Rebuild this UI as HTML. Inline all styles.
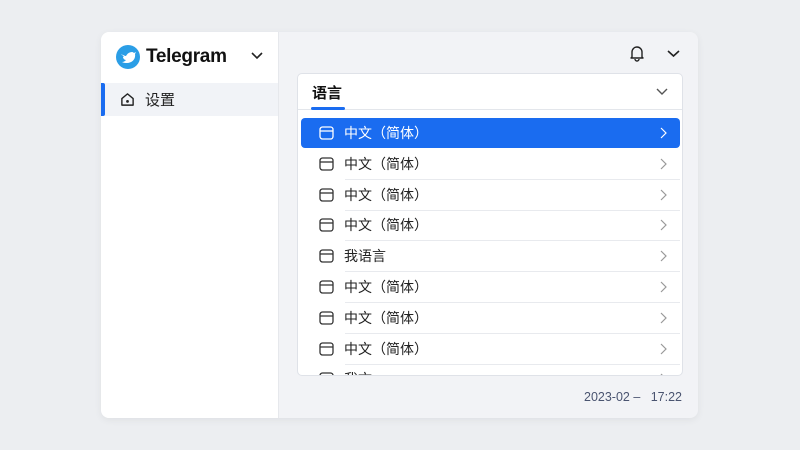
<!DOCTYPE html>
<html><head><meta charset="utf-8"><style>
*{margin:0;padding:0;box-sizing:border-box}
body{width:800px;height:450px;background:#eceef1;font-family:"Liberation Sans","Noto Sans CJK SC",sans-serif;position:relative;overflow:hidden}
.card{position:absolute;left:101px;top:32px;width:597px;height:386px;border-radius:8px;background:#f2f3f6;overflow:hidden;box-shadow:0 2px 8px rgba(0,0,0,.06)}
.side{position:absolute;left:0;top:0;width:178px;height:100%;background:#fff;border-right:1px solid #e6e8ec}
.logo{position:absolute;left:15px;top:13px;display:flex;align-items:center;gap:6px;font-size:19px;font-weight:bold;color:#111;letter-spacing:-.3px}
.nav{position:absolute;left:0;top:51px;width:177px;height:33px;background:#f1f3f7;display:flex;align-items:center;font-size:15px;color:#222}
.nav:before{content:"";position:absolute;left:0;top:0;width:4px;height:33px;background:#1a6cf0;border-radius:0 2px 2px 0}
.panel{position:absolute;left:196px;top:41px;width:386px;height:303px;background:#fff;border:1px solid #dfe2e8;border-radius:5px;overflow:hidden}
.hdr{height:36px;border-bottom:1px solid #e3e6eb;position:relative}
.hdr span{position:absolute;left:14px;top:8px;font-size:15px;font-weight:bold;color:#111}
.hdr i{position:absolute;left:13px;bottom:-1px;width:34px;height:3px;background:#1a6cf0;border-radius:2px}
.row{position:absolute;left:3px;width:379px;height:30px;display:flex;align-items:center;font-size:14px;color:#222}
.row .t{position:absolute;left:43px}
.row svg.ic{position:absolute;left:18px;top:8px}
.row svg.ar{position:absolute;right:13px;top:9px}
.row:after{content:"";position:absolute;left:44px;right:0;bottom:-1px;height:1px;background:#e8eaee}
.sel{background:#1a6cf0;color:#fff;border-radius:4px}
.sel:after{display:none}
.date{position:absolute;right:16px;bottom:14px;font-size:12.5px;color:#4a5470}
</style></head><body>
<div class="card">
<div class="side">
<div class="logo"><svg width="24" height="24" viewBox="0 0 24 24"><circle cx="12" cy="12" r="12" fill="#2b9ee6"/><path d="M5 9c2 1 4 2 5 2 1-2 3-4 6-4 1 0 2 1 2 1l2-1-1 2c1 5-3 9-8 9-2 0-3 0-5-1 2 0 3-1 4-2-2 0-3-2-3-3h1c-1-1-2-2-2-3z" fill="#fff"/></svg>Telegram</div>
<svg style="position:absolute;left:150px;top:20px" width="12" height="8" viewBox="0 0 12 8"><path d="M1 1l5 5 5-5" fill="none" stroke="#222" stroke-width="1.6"/></svg>
<div class="nav"><svg style="margin-left:19px;margin-right:10px" width="15" height="15" viewBox="0 0 16 16"><path d="M2 7l6-5 6 5v7H2z" fill="none" stroke="#222" stroke-width="1.5" stroke-linejoin="round"/><circle cx="8" cy="10" r="1.5" fill="#222"/></svg>设置</div>
</div>
<svg style="position:absolute;left:528px;top:13px" width="16" height="17" viewBox="0 0 16 17"><path d="M3 12V7a5 5 0 0110 0v5l1 1H2z M6 14a2 2 0 004 0" fill="none" stroke="#222" stroke-width="1.4" stroke-linejoin="round"/></svg>
<svg style="position:absolute;left:566px;top:18px" width="13" height="8" viewBox="0 0 13 8"><path d="M1 1l5.5 5 5.5-5" fill="none" stroke="#222" stroke-width="1.6"/></svg>
<div class="panel">
<div class="hdr"><span>语言</span><i></i><svg style="position:absolute;right:14px;top:14px" width="12" height="7" viewBox="0 0 12 7"><path d="M1 1l5 5 5-5" fill="none" stroke="#555" stroke-width="1.4"/></svg></div>
<div id="rows"></div>
</div>
<div class="date">2023-02 –&nbsp;&nbsp; 17:22</div>
</div>
<script>
var L=["中文（简体）","中文（简体）","中文（简体）","中文（简体）","我语言","中文（简体）","中文（简体）","中文（简体）","我文"];
var h="";L.forEach(function(t,i){var s=i==0;var c=s?"#fff":"#333";
h+='<div class="row'+(s?' sel':'')+'" style="top:'+(44+i*30.8)+'px"><svg class="ic" width="15" height="14" viewBox="0 0 15 14"><rect x="1" y="1" width="13" height="12" rx="2.5" fill="none" stroke="'+c+'" stroke-width="1.3"/><path d="M1 5h13" stroke="'+c+'" stroke-width="1.3"/></svg><span class="t">'+t+'</span><svg class="ar" width="7" height="12" viewBox="0 0 7 12"><path d="M1 1l5 5-5 5" fill="none" stroke="'+(s?'#fff':'#999')+'" stroke-width="1.2"/></svg></div>';});
document.getElementById("rows").innerHTML=h;
</script>
</body></html>
